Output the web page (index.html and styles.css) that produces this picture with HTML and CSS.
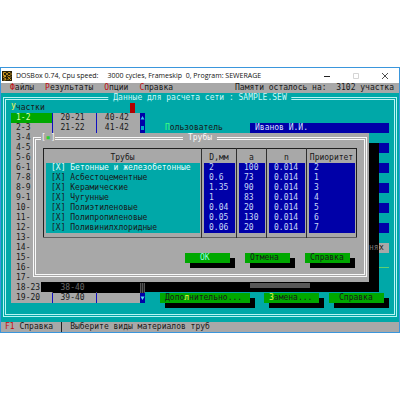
FILE: index.html
```
<!DOCTYPE html>
<html lang="ru">
<head>
<meta charset="utf-8">
<title>SEWERAGE</title>
<link rel="stylesheet" href="styles.css">
</head>
<body>
<div class="window">
  <header class="titlebar">
    <svg class="logo" viewBox="0 0 10 10" aria-hidden="true">
      <rect width="10" height="10" fill="#2a2108"/>
      <path d="M1.500 1.500h2l1 1v1l-1 1h-2zM6.500 1.500h1.500l1 1v1l-1 1h-1.500l-1-1v-1zM4 5.500h-2l-.5 1 2.500 1.500-.5 1h-2M5.500 5.500l3.500 3.500M9 5.500l-3.500 3.500" fill="none" stroke="#e0a526" stroke-width="0.9"/>
    </svg>
    <span class="caption">DOSBox 0.74, Cpu speed: &nbsp;&nbsp;&nbsp; 3000 cycles, Frameskip &nbsp;0, Program: SEWERAGE</span>
    <button class="win-btn" aria-label="Свернуть"><svg viewBox="0 0 8 8"><path d="M1 4.500h6" stroke="#222"/></svg></button>
    <button class="win-btn" aria-label="Развернуть" disabled><svg viewBox="0 0 8 8"><path d="M1.500 1.500h5v5h-5z" fill="none" stroke="#d5d5d5"/></svg></button>
    <button class="win-btn" aria-label="Закрыть"><svg viewBox="0 0 8 8"><path d="M1 1l6 6M7 1l-6 6" stroke="#222" stroke-width="0.8"/></svg></button>
  </header>

  <main class="screen">
    <nav class="menubar">
      <a href="#"><b>Ф</b>айлы</a>
      <a href="#"><b>Р</b>езультаты</a>
      <a href="#"><b>О</b>пции</a>
      <a href="#"><b>С</b>правка</a>
      <span class="memory">Памяти осталось на:&nbsp; 3102 участка</span>
    </nav>

    <section class="desk">
      <h1>Данные для расчета сети : SAMPLE.SEW</h1>
      <div class="segments">
        <div class="seg-label"><span><i>У</i>частки</span><span class="cursor"></span></div>
        <div class="seg-box">
          <table class="seg-table">
            <tr><td class="current">1-2</td><td>20-21</td><td>40-42</td></tr>
            <tr><td>2-3</td><td>21-22</td><td>41-42</td></tr>
            <tr><td>3-4</td><td></td><td></td></tr>
            <tr><td>4-5</td><td></td><td></td></tr>
            <tr><td>5-6</td><td></td><td></td></tr>
            <tr><td>6-1</td><td></td><td></td></tr>
            <tr><td>7-8</td><td></td><td></td></tr>
            <tr><td>8-9</td><td></td><td></td></tr>
            <tr><td>9-1</td><td></td><td></td></tr>
            <tr><td>10-</td><td></td><td></td></tr>
            <tr><td>11-</td><td></td><td></td></tr>
            <tr><td>12-</td><td></td><td></td></tr>
            <tr><td>13-</td><td></td><td></td></tr>
            <tr><td>14-</td><td></td><td></td></tr>
            <tr><td>15-</td><td></td><td></td></tr>
            <tr><td>16-</td><td></td><td></td></tr>
            <tr><td>17-</td><td></td><td></td></tr>
            <tr class="shaded"><td>18-23</td><td>38-40</td><td></td></tr>
            <tr><td>19-20</td><td>39-40</td><td></td></tr>
          </table>
          <div class="scrollbar">
            <svg viewBox="0 0 5 10"><path d="M0.500 6.500h4L2.500 3z" fill="#30c8e8"/></svg>
            <svg viewBox="0 0 5 10"><path d="M1 3h3v4H1z" fill="#00a8c8"/></svg>
            <svg class="hatch" viewBox="0 0 5 10"><path d="M0 0h5v10H0z" fill="#222"/><path d="M0 1h5M0 3h5M0 5h5M0 7h5M0 9h5" stroke="#888" stroke-dasharray="1 1"/></svg>
            <svg viewBox="0 0 5 10"><path d="M0.500 3.500h4L2.500 7z" fill="#50e0f0"/></svg>
          </div>
        </div>
      </div>

      <div class="form">
        <div class="field"><label for="user"><i class="hot">П</i>ользователь</label><input id="user" value="Иванов И.И."></div>
        <div class="fields-rest">
          <span class="stub"></span>
          <span class="stub"></span>
          <span class="stub"></span>
          <span class="stub"></span>
          <span class="stub"></span>
          <span class="tail"><span>ня</span>х</span>
          <span class="rule"></span>
        </div>
        <div class="strip"></div>
        <div class="actions">
          <button class="btn long">Допо<i>л</i>нительно...</button>
          <button class="btn mid"><i>З</i>амена...</button>
          <button class="btn mid help">Справка</button>
        </div>
      </div>
    </section>

    <footer class="status"><span><b>F1</b> Справка</span><span class="bar"></span><span>Выберите виды материалов труб</span></footer>

    <section class="dialog" role="dialog" aria-labelledby="dlg-title">
      <div class="dialog-frame">
        <button class="close" aria-label="Закрыть окно">[<i>▪</i>]</button>
        <h2 id="dlg-title">Трубы</h2>
        <table class="pipes">
          <colgroup><col><col class="c-d"><col class="c-a"><col class="c-n"><col class="c-p"></colgroup>
          <thead><tr><th>Трубы</th><th>D,мм</th><th>a</th><th>n</th><th>Приоритет</th></tr></thead>
          <tbody>
            <tr class="selected"><td>[X] Бетонные и железобетонные</td><td>2</td><td>100</td><td>0.014</td><td>2</td></tr>
            <tr><td>[X] Асбестоцементные</td><td>0.6</td><td>73</td><td>0.014</td><td>1</td></tr>
            <tr><td>[X] Керамические</td><td>1.35</td><td>90</td><td>0.014</td><td>3</td></tr>
            <tr><td>[X] Чугунные</td><td>1</td><td>83</td><td>0.014</td><td>4</td></tr>
            <tr><td>[X] Полиэтиленовые</td><td>0.04</td><td>20</td><td>0.014</td><td>5</td></tr>
            <tr><td>[X] Полипропиленовые</td><td>0.05</td><td>130</td><td>0.014</td><td>6</td></tr>
            <tr><td>[X] Поливинилхлоридные</td><td>0.06</td><td>20</td><td>0.014</td><td>7</td></tr>
          </tbody>
        </table>
        <div class="dialog-actions">
          <button class="btn default">OK</button>
          <button class="btn">Отмена</button>
          <button class="btn">Справка</button>
        </div>
      </div>
    </section>
  </main>
</div>
</body>
</html>
```

FILE: styles.css
```
* { box-sizing: border-box; }

body {
  margin: 0;
  padding-top: 67px;
  background: #fff;
}

.window {
  border: 1px solid #3a96dc;
  font: 8px/10px "DejaVu Sans Mono", "Liberation Mono", monospace;
  color: #181818;
}

button, input {
  border: 0;
  border-radius: 0;
  margin: 0;
  padding: 0;
  background: none;
  font: inherit;
  color: inherit;
}

i, b { font-style: normal; font-weight: normal; }

h1, h2 { margin: 0; font: inherit; }

table { border-collapse: collapse; table-layout: fixed; }

/* Title bar */
.titlebar {
  display: flex;
  align-items: center;
  height: 15px;
  background: #fff;
  font: 7px/10px "Open Sans", sans-serif;
}
.logo { width: 10px; height: 10px; margin: 0 4px 0 1px; }
.caption { flex: 1; white-space: nowrap; color: #111; }
.win-btn { display: flex; align-items: center; justify-content: center; width: 29px; height: 14px; }
.win-btn svg { width: 8px; height: 8px; }

/* DOS screen */
.screen { position: relative; background: #00a8a8; white-space: nowrap; }

.menubar { display: flex; gap: 11px; padding: 0 5px 0 9px; background: #a8a8a8; }
.menubar a { color: inherit; text-decoration: none; }
.menubar b, .status b { color: #c01010; }
.memory { margin-left: auto; }

/* Network data window */
.desk {
  position: relative;
  display: flex;
  margin: 4px 2px 0;
  padding: 3px 5px 11px;
  border: 3px double #b8f4f4;
}
.desk h1 {
  position: absolute;
  top: -7px;
  left: 50%;
  transform: translateX(-50%);
  padding: 0 5px;
  background: #00a8a8;
  color: #c8f8f8;
}
.segments { width: 134px; }
.seg-label { display: flex; justify-content: space-between; height: 10px; padding-right: 10px; }
.seg-label i, .btn i { color: #f0f050; }
.cursor { width: 5px; background: #b00000; }
.seg-box { display: flex; }
.seg-table { flex: 1; background: #a8a8a8; }
.seg-table td { height: 10px; padding: 0 0 0 5px; }
.seg-table td:first-child { width: 41px; }
.seg-table td + td { border-left: 1px solid #1010c0; padding-left: 8px; }
.seg-table .current { background: #00a800; color: #d8ffb0; }
.seg-table .shaded td + td { position: relative; z-index: 2; background: #000; color: #686868; border-left-color: #555; }
.scrollbar { display: flex; flex-direction: column; width: 5px; background: #0000a8; }
.scrollbar svg { width: 5px; height: 10px; }
.scrollbar .hatch { position: relative; z-index: 2; margin-top: auto; }

.form { flex: 1; min-width: 0; display: flex; flex-direction: column; padding: 20px 0 0 15px; }
.field { display: flex; padding-left: 5px; }
.field label { width: 85px; }
.hot { color: #40ff80; }
.field input { flex: 1; min-width: 0; height: 10px; padding-left: 5px; background: #0000a8; color: #d8e0ff; }
.fields-rest { display: flex; flex-direction: column; align-items: flex-end; gap: 10px; padding-top: 10px; }
.stub { width: 20px; height: 10px; background: #0000a8; }
.tail { position: relative; z-index: 2; width: 20px; height: 10px; background: #a8a8a8; }
.tail span { display: inline-block; width: 10px; background: #000; color: #777; }
.rule { width: 10px; height: 1px; margin-top: 4px; background: #60d070; }
.strip { position: relative; z-index: 2; width: 60px; height: 5px; margin: auto 0 5px 90px; background: #585858; }
.actions { display: flex; gap: 10px; padding-right: 5px; }

.btn {
  width: 45px;
  height: 10px;
  padding-left: 5px;
  background: #00a800;
  box-shadow: 5px 5px 0 #000;
  text-align: left;
}
.btn.mid { width: 55px; }
.btn.long { width: 90px; margin-right: auto; }
.btn.help { padding-left: 10px; }
.btn.default { padding-left: 15px; color: #90ffe0; }

.status { display: flex; gap: 8px; margin-top: 5px; padding-left: 4px; background: #a8a8a8; }
.bar { width: 1px; background: #202020; }

/* Pipe materials dialog */
.dialog {
  position: absolute;
  z-index: 1;
  top: 50px;
  left: 30px;
  right: 30px;
  padding: 4px 2px 5px;
  background: #a8a8a8;
  box-shadow: 10px 10px 0 #000;
}
.dialog-frame { position: relative; padding: 8px 7px 11px; border: 3px double #f8f8f8; }
.close, .dialog h2 { position: absolute; top: -7px; background: #a8a8a8; color: #f8f8f8; }
.close { left: 5px; }
.close i { color: #30d030; }
.dialog h2 { left: 50%; transform: translateX(-50%); padding: 0 5px; }

.pipes { width: 100%; border: 1px solid #202020; border-bottom-color: #606060; }
.pipes th, .pipes td { padding: 0 2px; text-align: left; font-weight: normal; }
.pipes th { height: 14px; vertical-align: bottom; text-align: center; }
.pipes th + th, .pipes td + td { border-left: 1px solid #303030; }
.pipes td { height: 10px; background: #00a8a8; background-clip: content-box; text-indent: 5px; }
.pipes td + td { background-color: #0000a8; color: #c8d8f8; }
.pipes th:last-child { padding: 0; }
.pipes tbody tr:last-child td { height: 14px; padding-bottom: 4px; }
.pipes .selected td:first-child { color: #e0ffff; }
.c-d { width: 35px; }
.c-a { width: 30px; }
.c-n { width: 40px; }
.c-p { width: 50px; }

.dialog-actions { display: flex; justify-content: flex-end; gap: 15px; margin-top: 15px; padding-right: 7px; }
```
